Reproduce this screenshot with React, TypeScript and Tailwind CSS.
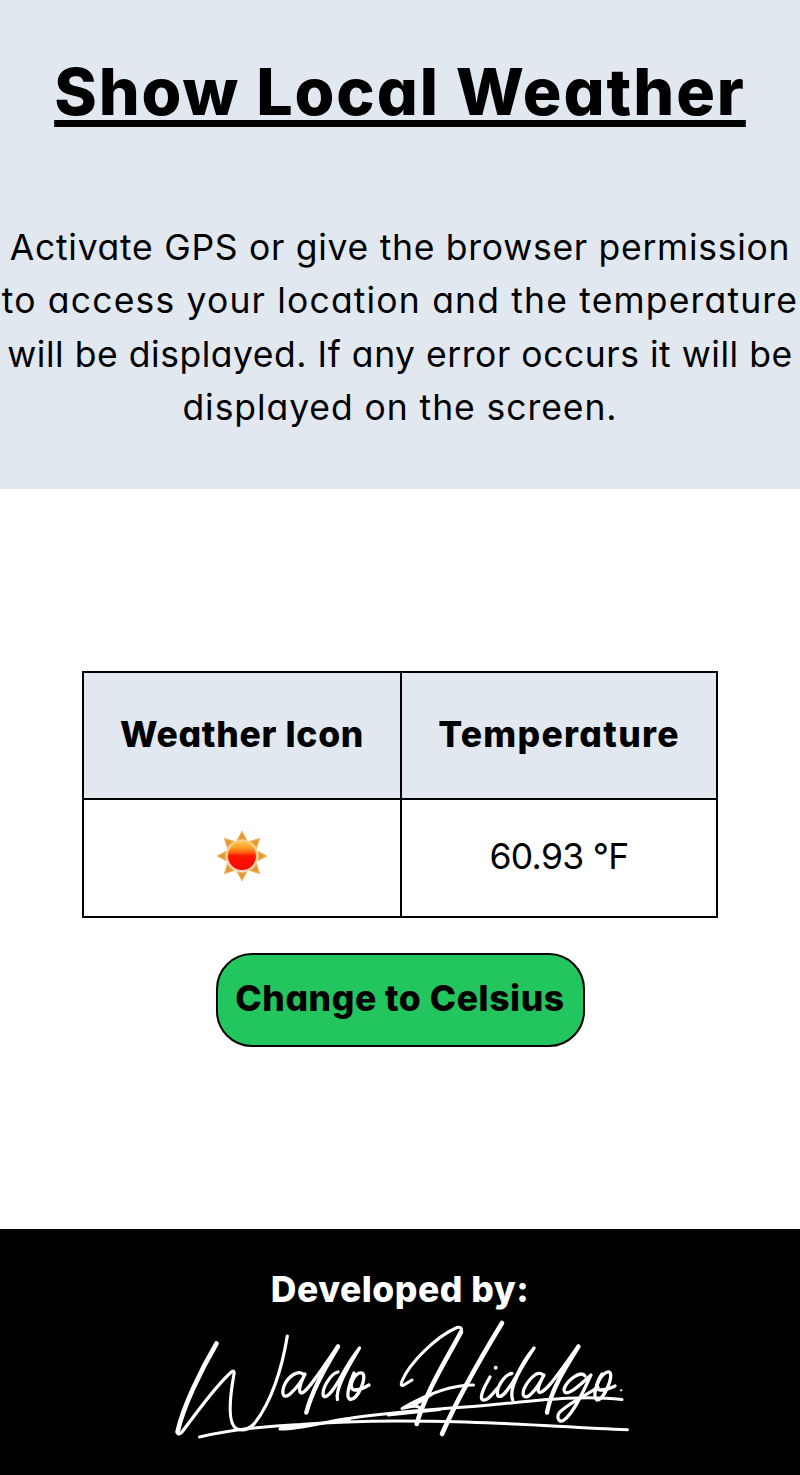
const rays = [0, 45, 90, 135, 180, 225, 270, 315];

function SunIcon() {
  return (
    <svg className="mb-[4px]" width="56" height="56" viewBox="-28 -28 56 56" aria-label="Sunny">
      <defs>
        <linearGradient id="disc" x1="0" y1="0" x2="0" y2="1">
          <stop offset="0" stopColor="#ffc24a" />
          <stop offset="0.2" stopColor="#fba02a" />
          <stop offset="0.38" stopColor="#fb5c0c" />
          <stop offset="0.5" stopColor="#fd1402" />
          <stop offset="1" stopColor="#f80800" />
        </linearGradient>
        <linearGradient id="halo" x1="0" y1="0" x2="0" y2="1">
          <stop offset="0" stopColor="#fdc766" />
          <stop offset="1" stopColor="#ffcdb8" />
        </linearGradient>
        <filter id="soft" x="-20%" y="-20%" width="140%" height="140%">
          <feGaussianBlur stdDeviation="0.7" />
        </filter>
      </defs>
      <g filter="url(#soft)">
        {rays.map((angle) => (
          <path
            key={angle}
            d="M0 -25 L5 -15.500 Q0 -17.500 -5 -15.500 Z"
            fill="#e5982e"
            stroke="#f3bf78"
            strokeWidth="1"
            transform={`rotate(${angle})`}
          />
        ))}
        <circle r="15.8" fill="url(#halo)" />
        <circle r="14" fill="url(#disc)" />
      </g>
    </svg>
  );
}

function Signature() {
  return (
    <svg
      width="465"
      height="130"
      viewBox="170 1315 465 130"
      fill="none"
      stroke="#fff"
      strokeWidth="3.3"
      strokeLinecap="round"
      strokeLinejoin="round"
      aria-label="Signature"
    >
      <path strokeWidth="4.600" d="M216.500 1343.500 C201 1370 183 1407 177.500 1432" />
      <path strokeWidth="3.200" d="M177.500 1432 Q178 1436 182 1432 C196 1414 215 1386 232 1371.500 Q234.500 1370 234 1374 C230 1396 227 1424 237 1429 Q246 1432 254 1424 C271 1403 282 1369 287.300 1336" />
      <path strokeWidth="3" d="M199.500 1437 C225 1431 258 1426.500 300 1424.500 C345 1421 390 1420.500 430 1421.300 C500 1422 560 1427 627.500 1429.700" />
      <path strokeWidth="3" d="M280 1429 C304 1429 325 1421.500 350 1418.300 C397 1411 460 1408 500 1404 C541 1400 583 1395 622 1399.500" />
      <path d="M280 1428 L350 1420 M388 1415.500 L440 1410" strokeWidth="2" />
      <path d="M304 1375 C299 1369 288 1376 284 1386 C281 1395 284 1399 290 1394 C297 1388 303 1379 305 1374 C299 1386 298 1393 302 1393 C308 1391 318 1374 338.300 1346" />
      <path strokeWidth="4.400" d="M338 1346.500 C324 1369 312 1391 306.300 1412.500" />
      <path d="M338 1372 C330 1374 321 1390 323.500 1396 C327 1400 336 1386 342 1375 C347 1366 353 1356 359.500 1348 C347 1369 335 1389 337.500 1399.500" />
      <path d="M354 1373 C350 1382 345 1397 350 1399.500 C358 1400 368 1376 362 1373 C355 1371 347 1388 354 1390 Q361 1390 369 1385" />
      <path strokeWidth="3" d="M412 1380 L403 1385.500 Q400 1386 402 1381 C409 1364 435 1337 457 1327.500 Q463 1326 461 1333" />
      <path strokeWidth="4.600" d="M461 1332 C448 1357 426 1391 416.700 1424" />
      <path strokeWidth="4.600" d="M502 1323 C485 1351 459 1395 442 1434" />
      <path strokeWidth="3" d="M473.500 1385 C447 1385 420 1398 402 1408.500 C410 1407 417 1404 421 1409 M413 1406 L434 1393" />
      <path d="M490 1377 C486 1384 478 1398 483 1400 C488 1401 493 1393 497.500 1388" />
      <circle cx="495.700" cy="1367.800" r="1.200" strokeWidth="1.500" fill="#fff" />
      <path d="M512 1373.500 C504 1374 495 1390 498 1396 C503 1399 510 1386 516 1377 C521 1366 527 1356 534 1348 C522 1366 508 1388 512.700 1400" />
      <path d="M543 1375 C538 1369 528 1380 524 1389 C521 1398 527 1399 532 1393 C538 1387 542 1379 544 1375 C539 1384 536 1392 540 1392.500 C547 1391 558 1374 578.500 1346" />
      <path strokeWidth="4.400" d="M578.500 1346.500 C565 1368 551 1390 547 1412.500" />
      <path strokeWidth="3.200" d="M585 1376 C581 1370 567 1380 564 1389 C564 1399 577 1388 591 1375 C585 1387 575 1412 564 1420 C560 1423 556 1419 559 1413 C568 1403 589 1394 598 1387" />
      <path d="M602 1374 C597 1381 592 1397 597 1400 C604 1400 615 1374 609 1372 C602 1371 592 1390 600 1390 Q607 1390 615 1386" />
      <circle cx="621" cy="1390.300" r="0.800" strokeWidth="1" />
    </svg>
  );
}

export default function App() {
  return (
    <div className="flex h-[1475px] w-[800px] flex-col overflow-hidden bg-white font-['Inter',sans-serif] text-[35.5px] text-black [font-feature-settings:'cv11']">
      <header className="flex h-[489px] flex-col items-center bg-[#e2e8f0]">
        <h1 className="mt-[52px] h-[80px] whitespace-nowrap text-[64.5px] font-extrabold leading-[80px] tracking-[1.9px] underline decoration-[7px] underline-offset-[5px] [text-decoration-skip-ink:none]">
          Show Local Weather
        </h1>
        <p className="mt-[89px] flex flex-col items-center whitespace-nowrap leading-[53.4px]">
          <span className="tracking-[0.72px]">Activate GPS or give the browser permission</span>
          <span className="tracking-[1.17px]">to access your location and the temperature</span>
          <span className="tracking-[0.53px]">will be displayed. If any error occurs it will be</span>
          <span className="tracking-[0.93px]">displayed on the screen.</span>
        </p>
      </header>

      <main className="flex h-[740px] flex-col items-center pt-[182px]">
        <div className="grid h-[247px] w-[636px] grid-cols-[316px_314px] grid-rows-[125px_116px] gap-[2px] border-2 border-black bg-black text-center">
          <div className="flex items-center justify-center bg-[#e2e8f0] pb-[2px] font-extrabold">
            <span className="tracking-[0.7px]">Weather Icon</span>
          </div>
          <div className="flex items-center justify-center bg-[#e2e8f0] pb-[2px] font-extrabold">
            <span className="tracking-[1.3px]">Temperature</span>
          </div>
          <div className="flex items-center justify-center bg-white">
            <SunIcon />
          </div>
          <div className="flex items-center justify-center bg-white pb-[2px]">
            <span className="tracking-[-0.7px]">60.93 °F</span>
          </div>
        </div>
        <button className="mt-[35px] flex h-[94px] w-[369px] items-center justify-center whitespace-nowrap rounded-[36px] border-2 border-black bg-[#22c55e] pb-[2px] font-extrabold">
          <span className="tracking-[0.55px]">Change to Celsius</span>
        </button>
      </main>

      <footer className="flex h-[246px] flex-col items-center bg-black text-white">
        <p className="mt-[34px] h-[52px] font-extrabold leading-[53px] tracking-[0.5px]">Developed by:</p>
        <div className="ml-[5px]">
          <Signature />
        </div>
      </footer>
    </div>
  );
}
